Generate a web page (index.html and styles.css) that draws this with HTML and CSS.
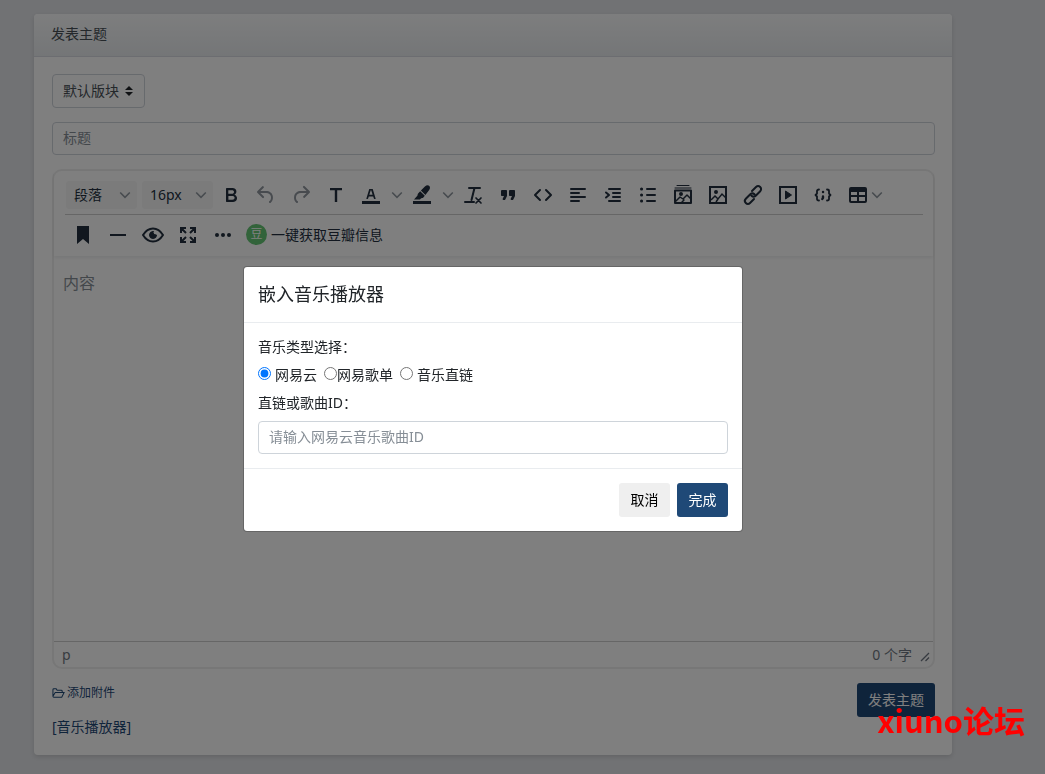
FILE: index.html
```html
<!DOCTYPE html>
<html lang="zh-CN">
<head>
<meta charset="utf-8">
<title>发表主题</title>
<link rel="stylesheet" href="styles.css">
</head>
<body>
<svg class="defs" width="0" height="0" aria-hidden="true">
  <symbol id="chev" viewBox="0 0 12 12"><path d="M1.200 3.500 6 8.300 10.800 3.500" fill="none" stroke="currentColor" stroke-width="1.600"/></symbol>
</svg>
<main class="page">
  <section class="card">
    <header class="card-header">发表主题</header>
    <form class="card-body">
      <label class="forum">
        <select class="forum-select" aria-label="版块"><option>默认版块</option></select>
        <svg class="sort" viewBox="0 0 8 12" width="8" height="12"><path d="M4 1 8 5H0ZM4 11 0 7h8Z"/></svg>
      </label>
      <input class="field" type="text" placeholder="标题" aria-label="标题">
      <div class="editor">
        <div class="toolbar">
          <div class="tool-row first">
            <div class="tool-selects">
              <label class="tool-select"><select aria-label="段落格式"><option>段落</option></select><svg class="chev"><use href="#chev"/></svg></label>
              <label class="tool-select"><select aria-label="字号"><option>16px</option></select><svg class="chev"><use href="#chev"/></svg></label>
            </div>
            <button type="button" class="tool" aria-label="粗体"><svg viewBox="0 0 24 24"><path d="M7.800 19c-.3 0-.5 0-.6-.2l-.2-.5V5.700c0-.2 0-.4.2-.5l.6-.2h5c1.500 0 2.700.3 3.500 1 .7.6 1.100 1.400 1.100 2.500a3 3 0 0 1-.6 1.900c-.4.6-1 1-1.600 1.200.4.1.9.3 1.300.6s.8.7 1 1.200c.4.4.5 1 .5 1.600 0 1.300-.4 2.300-1.300 3-.8.7-2.100 1-3.800 1H7.800Zm5-8.300c.6 0 1.200-.1 1.600-.5.4-.3.6-.7.6-1.300 0-1.100-.8-1.700-2.300-1.700H9.300v3.500h3.400Zm.5 6c.7 0 1.300-.1 1.700-.4.4-.4.6-.9.6-1.500s-.2-1-.7-1.400c-.4-.3-1-.4-2-.4H9.400v3.800h4Z"/></svg></button>
            <button type="button" class="tool" disabled aria-label="撤销"><svg viewBox="0 0 24 24"><path d="M6.400 8H12c3.700 0 6.200 2 6.800 5.100.6 2.700-.4 5.600-2.300 6.800a1 1 0 0 1-1-1.800c1.100-.6 1.800-2.700 1.400-4.600-.5-2.100-2.100-3.500-4.900-3.500H6.400l3.300 3.300a1 1 0 1 1-1.400 1.400l-5-5a1 1 0 0 1 0-1.400l5-5a1 1 0 0 1 1.400 1.400L6.400 8Z"/></svg></button>
            <button type="button" class="tool" disabled aria-label="重做"><svg viewBox="0 0 24 24"><path d="M17.600 10H12c-2.800 0-4.400 1.400-4.900 3.500-.4 2 .3 4 1.400 4.600a1 1 0 1 1-1 1.800c-2-1.200-2.900-4.100-2.300-6.800.6-3 3-5.100 6.800-5.100h5.600l-3.300-3.300a1 1 0 1 1 1.400-1.400l5 5a1 1 0 0 1 0 1.400l-5 5a1 1 0 0 1-1.400-1.400l3.300-3.300Z"/></svg></button>
            <button type="button" class="tool" aria-label="文本"><svg viewBox="0 0 24 24"><path d="M6 5h12v2.300h-4.800V19h-2.400V7.300H6Z"/></svg></button>
            <button type="button" class="tool" aria-label="文字颜色"><svg viewBox="0 0 24 24"><path d="M3 18h18v3H3ZM8.700 16h-.8a.5.5 0 0 1-.5-.6l2.700-9c.1-.3.3-.4.5-.4h2.800c.2 0 .4.1.5.4l2.700 9a.5.5 0 0 1-.5.6h-.8a.5.5 0 0 1-.4-.4l-.7-2.200H9.800l-.7 2.200c-.1.2-.2.4-.4.4Zm2.600-7.600-1 3.400h3.300l-1-3.400a5 5 0 0 1-.6-2c0 .4-.2 1-.6 2Z"/></svg></button>
            <button type="button" class="tool-arrow" aria-label="选择文字颜色"><svg class="chev"><use href="#chev"/></svg></button>
            <button type="button" class="tool" aria-label="背景颜色"><svg viewBox="0 0 24 24"><path d="M3 18h18v3H3ZM10.200 8.200l4.600 4.600-1.700 1.900c-.6.5-1.500.2-2 .6L10 16.500H4l3.300-3.700c.6-1 .1-1.700.8-2.400ZM10.900 7.500l4-4.100c1.700-1.400 3.500-1.400 4.400-.4s1 2.700-.3 4.200l-3.600 4.900Z"/></svg></button>
            <button type="button" class="tool-arrow" aria-label="选择背景颜色"><svg class="chev"><use href="#chev"/></svg></button>
            <button type="button" class="tool" aria-label="清除格式"><svg viewBox="0 0 24 24" class="line"><path d="M8 5h11M13.500 5l-3 12M4 19h9"/><path d="m15 15 5 5m0-5-5 5" stroke-width="1.700"/></svg></button>
            <button type="button" class="tool" aria-label="引用"><svg viewBox="0 0 24 24"><path d="M7.500 17h.9c.4 0 .7-.2.9-.6L11 13V8c0-.6-.4-1-1-1H6a1 1 0 0 0-1 1v4c0 .6.4 1 1 1h2l-1.300 2.700a1 1 0 0 0 .8 1.300Zm8 0h.9c.4 0 .7-.2.9-.6L19 13V8c0-.6-.4-1-1-1h-4a1 1 0 0 0-1 1v4c0 .6.4 1 1 1h2l-1.300 2.700a1 1 0 0 0 .8 1.300Z"/></svg></button>
            <button type="button" class="tool" aria-label="源代码"><svg viewBox="0 0 24 24" class="line"><path d="m9 7-5 5 5 5m6-10 5 5-5 5"/></svg></button>
            <button type="button" class="tool" aria-label="左对齐"><svg viewBox="0 0 24 24" class="line"><path d="M5 6h14M5 10h8M5 14h14M5 18h8"/></svg></button>
            <button type="button" class="tool" aria-label="缩进"><svg viewBox="0 0 24 24" class="line"><path d="M8 6h11M12 10h7M12 14h7M8 18h11M5 9.500 8 12l-3 2.500"/></svg></button>
            <button type="button" class="tool" aria-label="列表"><svg viewBox="0 0 24 24" class="line"><path d="M11 6h8M11 12h8M11 18h8"/><path d="M5.500 6h.1M5.500 12h.1M5.500 18h.1" stroke-width="3"/></svg></button>
            <button type="button" class="tool" aria-label="批量图片"><svg viewBox="0 0 24 24" class="line"><path d="M4 7.500h16V20H4Z"/><path d="M4 5h16M6 2.500h12" stroke-width="1"/><path d="m5 18 4-4 3 2 4-4 4 4M11 19l2-2" stroke-width="1.500"/><circle cx="10" cy="11" r="1"/></svg></button>
            <button type="button" class="tool" aria-label="图片"><svg viewBox="0 0 24 24" class="line square"><path d="M4 4h16v16H4Z"/><path d="m5 17 4-4 3 3 4-5 4 4M10 19l2-3" stroke-width="1.500"/><circle cx="10" cy="9" r="1"/></svg></button>
            <button type="button" class="tool" aria-label="链接"><svg viewBox="0 0 24 24" class="line"><path d="m11 8 4-4c1.200-1.200 3-1.200 4.200 0s1.200 3 0 4.200l-4.500 4.500c-1.200 1.200-3 1.200-4.200 0M13 16l-4 4c-1.200 1.200-3 1.200-4.200 0s-1.200-3 0-4.200l4.500-4.500c1.200-1.200 3-1.200 4.200 0"/></svg></button>
            <button type="button" class="tool" aria-label="媒体"><svg viewBox="0 0 24 24" class="line square"><path d="M4 4h16v16H4Z"/><path d="m9.500 8 6 4-6 4Z" fill="currentColor" stroke-width="1"/></svg></button>
            <button type="button" class="tool" aria-label="代码示例"><svg viewBox="0 0 24 24" class="line"><path d="M8 6.500q-2 0-2 1.500v2.500L4.500 12 6 13.500V16q0 1.500 2 1.500M16 6.500q2 0 2 1.500v2.500l1.500 1.500-1.500 1.500V16q0 1.500-2 1.500" stroke-width="1.800"/><path d="M12 9h.1M12 13.500v1.300l-.7 1.200" stroke-width="2.400"/></svg></button>
            <button type="button" class="tool-table" aria-label="表格"><svg viewBox="0 0 24 24"><path fill-rule="evenodd" d="M5 4h14a2 2 0 0 1 2 2v12a2 2 0 0 1-2 2H5a2 2 0 0 1-2-2V6a2 2 0 0 1 2-2Zm0 5v3h6V9Zm8 0v3h6V9Zm-8 5v4h6v-4Zm8 0v4h6v-4Z"/></svg><svg class="chev"><use href="#chev"/></svg></button>
          </div>
          <div class="tool-row">
            <button type="button" class="tool" aria-label="书签"><svg viewBox="0 0 24 24"><path d="M6 3h12v18l-6-5-6 5Z"/></svg></button>
            <button type="button" class="tool" aria-label="分隔线"><svg viewBox="0 0 24 24" class="line square"><path d="M4 12h16"/></svg></button>
            <button type="button" class="tool" aria-label="预览"><svg viewBox="0 0 24 24" class="line"><path d="M2 12q4-6.500 10-6.500T22 12q-4 6.500-10 6.500T2 12Z"/><path d="M12 8.500c-.2 2 1 3.500 3.500 3.500a3.500 3.500 0 1 1-3.500-3.500Z" fill="currentColor" stroke-width="1"/></svg></button>
            <button type="button" class="tool" aria-label="全屏"><svg viewBox="0 0 24 24" class="line square"><path d="M5 10V5h5M5 5l5 5M14 5h5v5M19 5l-5 5M5 14v5h5M5 19l5-5M14 19h5v-5M19 19l-5-5"/></svg></button>
            <button type="button" class="tool" aria-label="更多"><svg viewBox="0 0 24 24"><circle cx="6" cy="12" r="2"/><circle cx="12" cy="12" r="2"/><circle cx="18" cy="12" r="2"/></svg></button>
            <button type="button" class="douban"><span class="douban-badge">豆</span>一键获取豆瓣信息</button>
          </div>
        </div>
        <textarea class="content" placeholder="内容" aria-label="内容"></textarea>
        <div class="status"><span class="path">p</span><span>0 个字</span><svg class="grip" viewBox="0 0 10 10" width="10" height="10"><path d="M1 9 9 1M5.500 9 9 5.500" fill="none" stroke="currentColor" stroke-width="1.300"/></svg></div>
      </div>
      <div class="actions">
        <div class="links">
          <a class="attach" href="#"><svg viewBox="0 0 14 12" width="13" height="12"><path d="M1 9.500V2.500Q1 1.500 2 1.500h2.500l1 1.500H10q1 0 1 1v1.500M1 9.500 3.500 5.500H13l-2.500 5H2Q1 10.500 1 9.500Z" fill="none" stroke="currentColor" stroke-width="1.100"/></svg>添加附件</a>
          <a href="#">[音乐播放器]</a>
        </div>
        <button type="submit" class="btn primary submit">发表主题</button>
      </div>
    </form>
  </section>
</main>
<div class="overlay">
  <form class="modal" role="dialog" aria-labelledby="modal-title">
    <h5 class="modal-title" id="modal-title">嵌入音乐播放器</h5>
    <div class="modal-body">
      <div class="modal-label">音乐类型选择：</div>
      <div class="radios">
        <label class="radio spaced"><input type="radio" name="kind" checked>网易云</label>
        <label class="radio"><input type="radio" name="kind">网易歌单</label>
        <label class="radio spaced"><input type="radio" name="kind">音乐直链</label>
      </div>
      <label class="modal-label" for="song">直链或歌曲ID：</label>
      <input class="field" id="song" type="text" placeholder="请输入网易云音乐歌曲ID">
    </div>
    <footer class="modal-footer">
      <button type="button" class="btn cancel">取消</button>
      <button type="button" class="btn primary">完成</button>
    </footer>
  </form>
</div>
<div class="watermark">xiuno论坛</div>
</body>
</html>
```
FILE: styles.css
```css
* { box-sizing: border-box; }
body {
  margin: 0;
  background: #e2e4e8;
  color: #212529;
  font: 14px/20px "Noto Sans", "Noto Sans CJK SC", sans-serif;
}
button, input, select, textarea { font: inherit; color: inherit; }
button { border: 0; background: none; padding: 0; }
a { color: #1f4977; text-decoration: none; }
.defs { position: absolute; }
.page { padding: 14px 93px 19px 34px; }
.card { background: #fff; border-radius: 4px; box-shadow: 0 2px 4px rgba(0, 0, 0, .12); }
.card-header {
  padding: 10px 17px 12px;
  background: linear-gradient(#fbfcfd, #e9ecef);
  border-bottom: 1px solid #d8dbe2;
  border-radius: 4px 4px 0 0;
  color: #495057;
}
.card-body { padding: 17px 17px 18px 18px; display: flex; flex-direction: column; align-items: stretch; }
.forum { position: relative; align-self: flex-start; margin-bottom: 14px; display: flex; color: #495057; }
.forum-select {
  appearance: none;
  width: 93px;
  height: 34px;
  padding: 0 10px;
  background: transparent;
  border: 1px solid #ced4da;
  border-radius: 4px;
}
.sort { position: absolute; right: 12px; top: 11px; fill: #212529; }
.field {
  width: 100%;
  height: 33px;
  padding: 0 10px 2px;
  background: #fff;
  border: 1px solid #ced4da;
  border-radius: 4px;
}
.field::placeholder { color: #868e96; opacity: 1; }
.editor { margin-top: 14px; border: 2px solid #eee; border-radius: 10px; color: #222f3e; }
.toolbar { padding: 4px 10px 2px 11px; box-shadow: 0 2px 3px rgba(34, 47, 62, .08); }
.tool-row { display: flex; align-items: center; gap: 1px; height: 39px; padding-left: 1px; }
.tool-row.first { height: 40px; border-bottom: 1px solid #ccc; }
.tool-selects { display: flex; gap: 5px; }
.tool-select { position: relative; width: 71px; }
.tool-select select {
  appearance: none;
  width: 100%;
  height: 28px;
  padding: 0 8px;
  background: #f7f7f7;
  border: 0;
  border-radius: 3px;
}
.tool-select .chev { position: absolute; right: 6px; top: 8px; }
.tool, .tool-arrow, .tool-table { height: 28px; display: flex; align-items: center; justify-content: center; flex: none; }
.tool { width: 34px; }
.tool:disabled { color: #90979f; }
.tool-arrow { width: 15px; }
.tool-table { width: 46px; gap: 1px; }
.tool-row svg { width: 24px; height: 24px; fill: currentColor; }
.tool-row .line { fill: none; stroke: currentColor; stroke-width: 2; stroke-linecap: round; stroke-linejoin: round; }
.tool-row .square { stroke-linecap: butt; stroke-linejoin: miter; }
.tool-row .chev { width: 12px; height: 12px; color: #90979f; }
.douban { display: flex; align-items: center; gap: 4px; margin-left: 5px; }
.douban-badge {
  width: 21px;
  height: 21px;
  border-radius: 50%;
  background: #65c675;
  color: #fff;
  font-size: 12px;
  line-height: 20px;
}
.content {
  display: block;
  width: 100%;
  height: 385px;
  padding: 15px 9px;
  border: 0;
  background: transparent;
  resize: none;
  font-size: 16px;
  line-height: 24px;
}
.content::placeholder { color: #868e96; opacity: 1; }
.status {
  display: flex;
  align-items: center;
  height: 26px;
  padding: 1px 3px 0 8px;
  border-top: 1px solid #ccc;
  color: #6f7782;
}
.path { flex: 1; }
.grip { margin: 4px 0 0 8px; }
.actions { display: flex; justify-content: space-between; align-items: flex-start; margin-top: 14px; }
.links { display: flex; flex-direction: column; gap: 14px; }
.attach { display: flex; align-items: center; gap: 2px; font-size: 12px; }
.btn { height: 34px; padding: 0 11px 1px; border-radius: 3px; min-width: 51px; }
.primary { background: #1f4977; color: #fff; }
.cancel { background: #efefef; color: #000; }
.overlay {
  position: fixed;
  inset: 0;
  display: flex;
  justify-content: center;
  align-items: flex-start;
  padding: 266px 59px 0 0;
  background: rgba(0, 0, 0, .5);
}
.modal {
  width: 500px;
  background: #fff;
  background-clip: padding-box;
  border: 1px solid rgba(0, 0, 0, .2);
  border-radius: 4px;
}
.modal-title { margin: 0; padding: 14px 14px 15px; font-size: 18px; line-height: 26px; font-weight: 400; border-bottom: 1px solid #e9ecef; }
.modal-body { padding: 13px 14px 14px; }
.modal-label { display: block; line-height: 21px; }
.radios { display: flex; gap: 7px; margin: 7px 0; line-height: 21px; }
.radio { display: flex; align-items: center; }
.radio input { width: 13px; height: 13px; margin: 0 0 2px; accent-color: #0075ff; }
.radio.spaced { gap: 4px; }
.modal-body .field { margin-top: 8px; }
.modal-footer { display: flex; justify-content: flex-end; gap: 7px; padding: 14px; border-top: 1px solid #e9ecef; }
.watermark {
  position: absolute;
  right: 20px;
  top: 700px;
  color: #f00;
  font: 700 31px/40px "Noto Sans CJK SC", sans-serif;
}
```
